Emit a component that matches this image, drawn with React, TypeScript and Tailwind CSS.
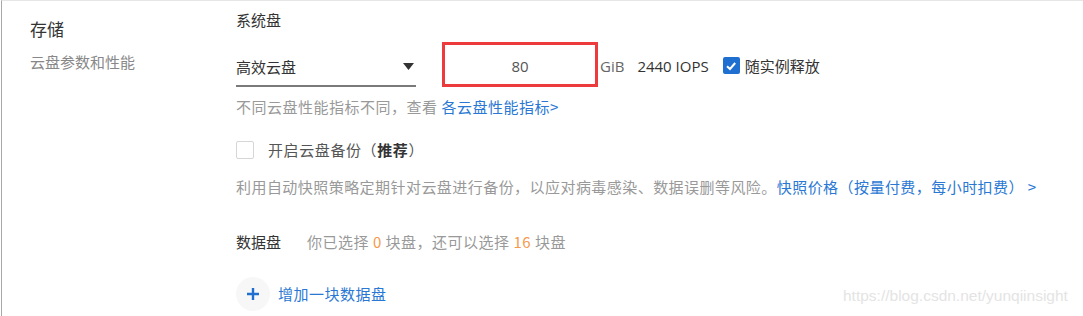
import React from "react";

const font = { fontFamily: '"Noto Sans CJK SC", "Noto Sans", sans-serif' };

export default function App() {
  return (
    <div
      className="relative w-[1083px] h-[316px] bg-white overflow-hidden"
      style={font}
    >
      <div className="ml-px h-full border-l border-t border-l-[#a8a8a8] border-t-[#e6e6e6] flex">
        {/* left column */}
        <div className="w-[234px] shrink-0 pl-[28px] pt-[17px]">
          <div className="text-[17px] leading-[22px] text-[#333]">存储</div>
          <div className="mt-[12px] text-[15px] leading-[20px] text-[#888]">云盘参数和性能</div>
        </div>

        {/* right column */}
        <div className="flex-1 pt-[8px] text-[15px]">
          <div className="leading-[22px] text-[#333]">系统盘</div>

          <div className="mt-[11px] flex items-center h-[45px]">
            <div className="w-[180px] h-[45px] flex items-center justify-between border-b-2 border-[#7a7a7a] pt-[6px] pr-[2px]">
              <span className="text-[#333] leading-[20px]">高效云盘</span>
              <svg width="11" height="7" viewBox="0 0 11 7">
                <path d="M0 0 L11 0 L5.5 7 Z" fill="#333" />
              </svg>
            </div>
            <div className="ml-[26px] w-[156px] h-[45px] border-[3px] border-[#ec3a3d] flex items-center justify-center">
              <span className="text-[#555] leading-[20px] pt-[2px]" style={{ fontFamily: '"Open Sans", "Noto Sans", sans-serif' }}>80</span>
            </div>
            <span className="ml-[2px] text-[#666] leading-[20px] pt-[2px]" style={{ fontFamily: '"Open Sans", "Noto Sans", sans-serif' }}>GiB</span>
            <span className="ml-[13px] text-[#333] leading-[20px] pt-[2px]" style={{ fontFamily: '"Open Sans", "Noto Sans", sans-serif' }}>2440 IOPS</span>
            <div className="ml-[14px] w-[17px] h-[17px] rounded-[2px] bg-[#1f6fd1] flex items-center justify-center mt-[2px]">
              <svg width="12" height="12" viewBox="0 0 12 12">
                <path d="M2 6.2 L5 9 L10.2 3" fill="none" stroke="#fff" strokeWidth="2" />
              </svg>
            </div>
            <span className="ml-[5px] text-[#333] leading-[20px] pt-[2px]">随实例释放</span>
          </div>

          <div className="mt-[10px] leading-[20px] text-[#999] tracking-[0.5px]">
            不同云盘性能指标不同，查看 <span className="text-[#2a78d4]">各云盘性能指标&gt;</span>
          </div>

          <div className="mt-[23px] flex items-center">
            <div className="w-[18px] h-[18px] border border-[#d6d6d6] rounded-[2px] bg-white" />
            <span className="ml-[14px] leading-[20px] text-[#555] tracking-[0.6px]">
              开启云盘备份（<span className="font-bold text-[#333]">推荐</span>）
            </span>
          </div>

          <div className="mt-[17px] leading-[20px] text-[#999] whitespace-nowrap tracking-[0.45px]">
            利用自动快照策略定期针对云盘进行备份，以应对病毒感染、数据误删等风险。
            <span className="text-[#2a78d4]">快照价格（按量付费，每小时扣费） &gt;</span>
          </div>

          <div className="mt-[35px] flex items-center leading-[20px]">
            <span className="text-[#333]">数据盘</span>
            <span className="ml-[26px] text-[#999] tracking-[0.5px]">
              你已选择 <span className="text-[#f59a4f]">0</span> 块盘，还可以选择{" "}
              <span className="text-[#f59a4f]">16</span> 块盘
            </span>
          </div>

          <div className="mt-[25px] flex items-center">
            <div className="w-[34px] h-[34px] rounded-full bg-[#f7f7f7] flex items-center justify-center">
              <svg width="14" height="14" viewBox="0 0 14 14">
                <path d="M7 1 V13 M1 7 H13" stroke="#1f6fd1" strokeWidth="2.4" />
              </svg>
            </div>
            <span className="ml-[8px] leading-[20px] text-[#2a78d4] tracking-[0.5px]">增加一块数据盘</span>
          </div>
        </div>
      </div>

      <div
        className="absolute left-[843px] top-[286px] text-[15.5px] leading-[20px] text-[#e4e4e4]"
        style={{ fontFamily: '"Liberation Sans", Arial, sans-serif' }}
      >
        https://blog.csdn.net/yunqiinsight
      </div>
    </div>
  );
}
